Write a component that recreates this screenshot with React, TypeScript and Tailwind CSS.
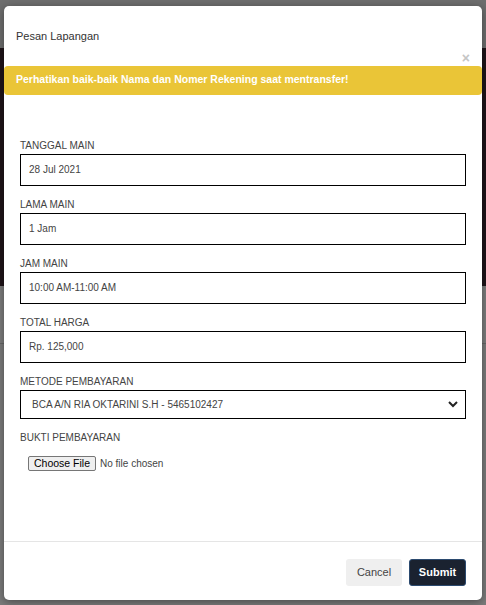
import React from 'react';

const fields = [
  { label: 'TANGGAL MAIN', value: '28 Jul 2021' },
  { label: 'LAMA MAIN', value: '1 Jam' },
  { label: 'JAM MAIN', value: '10:00 AM-11:00 AM' },
  { label: 'TOTAL HARGA', value: 'Rp. 125,000' },
];

export default function App() {
  return (
    <div className="relative h-[605px] w-[486px] overflow-hidden bg-[#7b7b7b] font-['Liberation_Sans',Arial,sans-serif]">
      {/* dimmed page behind the modal */}
      <div className="flex h-full flex-col">
        <div className="h-[48px] bg-[#6e6e6e]" />
        <div className="h-[238px] bg-[#1f1419]" />
        <div className="h-[58px] border-b border-[#666] bg-[#7d7d7d]" />
        <div className="flex-1 bg-[#7b7b7b]" />
      </div>

      {/* modal */}
      <div className="absolute left-[4px] top-[6px] flex h-[594px] w-[478px] flex-col rounded-[5px] bg-white shadow-[0_2px_8px_rgba(0,0,0,0.4)]">
        <div className="px-[12px] pt-[22px] text-[11px] text-[#333]">Pesan Lapangan</div>
        <div className="flex justify-end pr-[12px] pt-[8px]">
          <span className="text-[14px] font-bold leading-[10px] text-[#c5c5c5]">×</span>
        </div>
        <div className="mt-[3px] flex h-[29px] items-center rounded-[4px] bg-[#eac537] px-[12px] text-[10.5px] font-bold text-white">
          Perhatikan baik-baik Nama dan Nomer Rekening saat mentransfer!
        </div>

        <div className="flex flex-col px-[16px] pt-[44px]">
          {fields.map((f) => (
            <div key={f.label} className="mb-[12px]">
              <div className="mb-[2px] text-[10px] leading-[13px] text-[#444]">{f.label}</div>
              <div className="flex h-[32px] items-center border-[1.5px] border-black px-[8px] text-[10px] text-[#444]">
                {f.value}
              </div>
            </div>
          ))}
          <div className="mb-[2px] text-[10px] leading-[13px] text-[#444]">METODE PEMBAYARAN</div>
          <div className="flex h-[29px] items-center justify-between border-[1.5px] border-black pl-[11px] pr-[6px] text-[10px] text-[#444]">
            <span>BCA A/N RIA OKTARINI S.H - 5465102427</span>
            <svg width="12" height="12" viewBox="0 0 12 12">
              <path d="M2 4l4 4 4-4" fill="none" stroke="#222" strokeWidth="2" />
            </svg>
          </div>
          <div className="mt-[12px] text-[10px] leading-[13px] text-[#444]">BUKTI PEMBAYARAN</div>
          <div className="mt-[12px] flex items-center pl-[8px] text-[10px] text-[#444]">
            <span className="rounded-[2px] border border-[#767676] bg-[#efefef] px-[5px] text-[10.5px] leading-[13px] text-black">Choose File</span>
            <span className="ml-[4px]">No file chosen</span>
          </div>
        </div>

        <div className="flex-1" />
        <div className="flex h-[59px] items-center justify-end gap-[7px] border-t border-[#e5e5e5] px-[16px] pt-[2px]">
          <button className="h-[27px] w-[56px] rounded-[3px] bg-[#efefef] text-[11px] text-[#444]">Cancel</button>
          <button className="h-[27px] w-[57px] rounded-[3px] border border-[#2b4a6f] bg-[#1a2230] text-[11px] font-bold text-white">Submit</button>
        </div>
      </div>
    </div>
  );
}
